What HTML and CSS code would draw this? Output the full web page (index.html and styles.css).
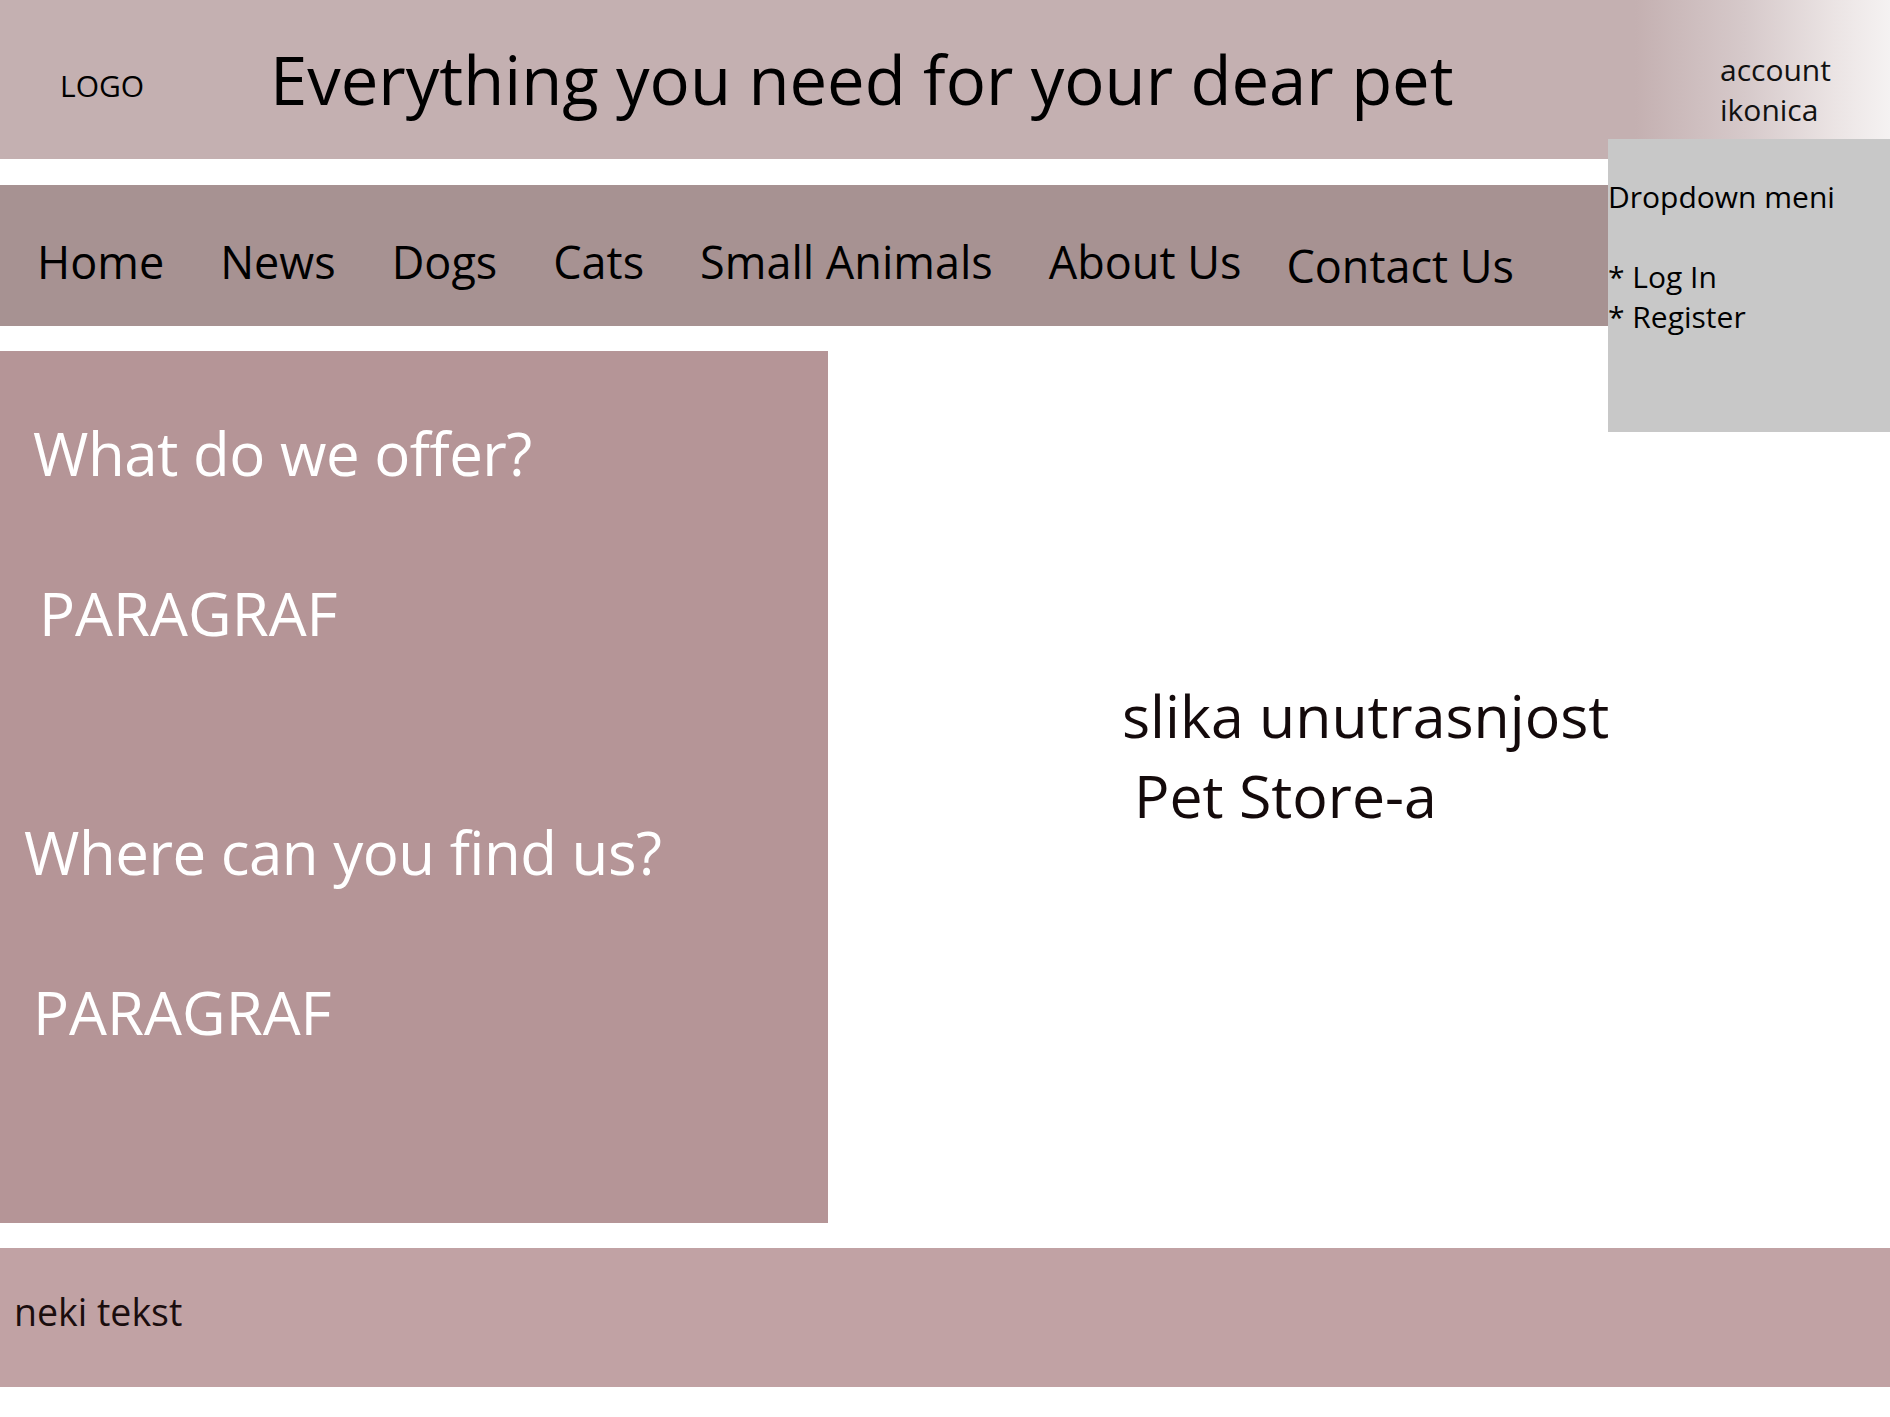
FILE: index.html
```html
<!DOCTYPE html>
<html lang="en">
<head>
<meta charset="utf-8">
<title>Pet Store</title>
<link rel="stylesheet" href="styles.css">
</head>
<body>
<header class="site-header">
  <div class="logo">LOGO</div>
  <h1 class="tagline">Everything you need for your dear pet</h1>
  <div class="account">account<br>ikonica</div>
  <div class="dropdown">
    <p class="dropdown-title">Dropdown meni</p>
    <p class="dropdown-spacer">&nbsp;</p>
    <p class="dropdown-item">* Log In</p>
    <p class="dropdown-item">* Register</p>
  </div>
</header>
<nav class="main-nav">
  <a class="nav-link" href="#">Home</a>
  <a class="nav-link" href="#">News</a>
  <a class="nav-link" href="#">Dogs</a>
  <a class="nav-link" href="#">Cats</a>
  <a class="nav-link" href="#">Small Animals</a>
  <a class="nav-link" href="#">About Us</a>
  <a class="nav-link nav-link--low" href="#">Contact Us</a>
</nav>
<main class="content">
  <section class="info-box">
    <h2 class="info-title">What do we offer?</h2>
    <p class="info-text">PARAGRAF</p>
    <h2 class="info-title info-title--second">Where can you find us?</h2>
    <p class="info-text info-text--second">PARAGRAF</p>
  </section>
  <div class="picture">
    <div class="picture-line">slika unutrasnjost</div>
    <div class="picture-line picture-line--indent">Pet Store-a</div>
  </div>
</main>
<footer class="site-footer">neki tekst</footer>
</body>
</html>
```
FILE: styles.css
```css
html, body {
  margin: 0;
  padding: 0;
  background: #ffffff;
}

body {
  width: 1890px;
  font-family: "Open Sans", "Noto Sans", sans-serif;
  color: #000;
}

.site-header {
  position: relative;
  height: 159px;
  box-sizing: border-box;
  padding-left: 60px;
  display: flex;
  align-items: flex-start;
  background: linear-gradient(to right, #c4b0b1 0, #c4b0b1 1635px, #d6c9ca 1745px, #ebe4e4 1835px, #f5f2f2 1890px);
}

.logo {
  width: 210px;
  flex: none;
  padding-top: 71px;
  font-size: 30px;
  line-height: 1;
}

.tagline {
  margin: 0;
  padding-top: 46px;
  font-size: 67px;
  font-weight: 400;
  line-height: 1;
  white-space: nowrap;
}

.account {
  margin-left: auto;
  width: 170px;
  flex: none;
  padding-top: 50px;
  font-size: 30px;
  line-height: 40px;
  color: #111;
}

.dropdown {
  position: absolute;
  top: 139px;
  right: 0;
  width: 282px;
  height: 293px;
  box-sizing: border-box;
  padding-top: 38px;
  background: #c8c8c8;
  font-size: 30px;
  line-height: 40px;
  z-index: 5;
}

.dropdown p {
  margin: 0;
  white-space: nowrap;
}

.main-nav {
  margin-top: 26px;
  height: 141px;
  box-sizing: border-box;
  padding: 54px 0 0 37px;
  display: flex;
  align-items: flex-start;
  gap: 56px;
  background: #a79292;
}

.nav-link {
  font-size: 45px;
  line-height: 1;
  color: #000;
  text-decoration: none;
  white-space: nowrap;
}

.nav-link--low {
  padding-top: 4px;
  margin-left: -11px;
}

.content {
  margin-top: 25px;
  height: 872px;
  display: flex;
}

.info-box {
  width: 828px;
  flex: none;
  box-sizing: border-box;
  padding: 72px 0 0 33px;
  background: #b59597;
  color: #fff;
}

.info-title {
  margin: 0;
  font-size: 60px;
  font-weight: 400;
  line-height: 1;
  letter-spacing: -0.5px;
  white-space: nowrap;
}

.info-text {
  margin: 100px 0 0 6px;
  font-size: 60px;
  line-height: 1;
}

.info-title--second {
  margin-top: 179px;
  margin-left: -9px;
}

.info-text--second {
  margin-left: 0;
}

.picture {
  flex: 1;
  box-sizing: border-box;
  padding: 324px 0 0 294px;
  font-size: 59px;
  line-height: 80px;
  color: #140a0b;
  white-space: nowrap;
}

.picture-line--indent {
  padding-left: 12px;
}

.site-footer {
  margin-top: 25px;
  height: 139px;
  box-sizing: border-box;
  padding: 45px 0 0 14px;
  background: #c1a2a4;
  font-size: 37.5px;
  line-height: 1;
  color: #1a0d0e;
}
```
